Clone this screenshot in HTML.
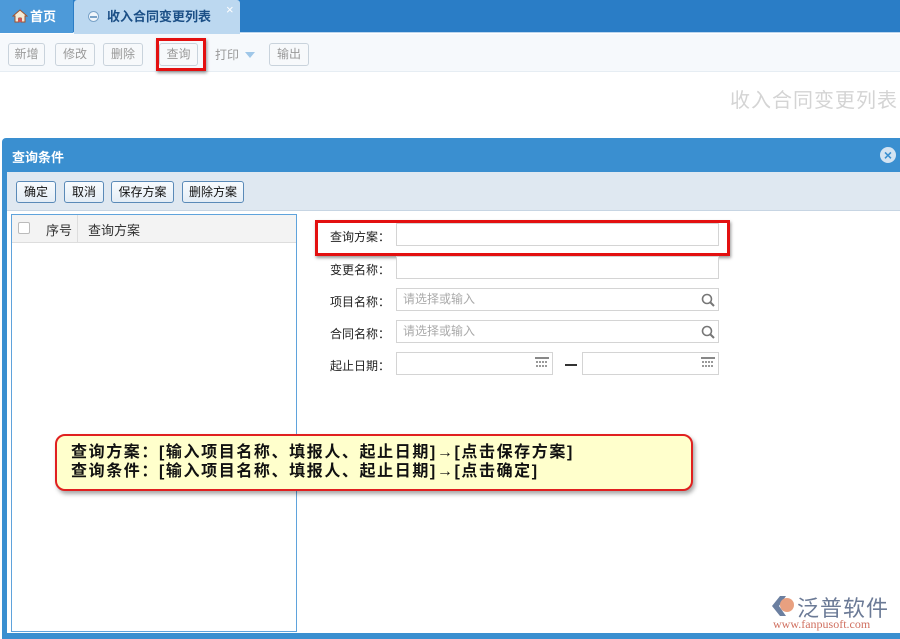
<!DOCTYPE html>
<html><head><meta charset="utf-8"><style>
*{margin:0;padding:0;box-sizing:border-box}
body{width:900px;height:639px;overflow:hidden;background:#fff;font-family:"Liberation Sans","Noto Sans CJK SC",sans-serif;font-size:12px;position:relative;color:#222}
.abs{position:absolute}
.tabbar{left:0;top:0;width:900px;height:33px;background:#2a7dc6;border-bottom:1px solid #bcd6ee}
.tab1{left:0;top:0;width:73px;height:33px;background:#4d9ad9;color:#fff;font-weight:bold;font-size:13px;line-height:33px;padding-left:30px}
.tab2{left:74px;top:0;width:166px;height:34px;background:#bcd8f0;color:#1b4f86;font-weight:bold;font-size:13px;line-height:34px;padding-left:33px;border-radius:3px 3px 0 0}
.tb{left:0;top:34px;width:900px;height:38px;background:#f6f9fc;border-bottom:1px solid #e6edf3}
.btn{position:absolute;top:43px;height:23px;border:1px solid #c9d3dc;border-radius:3px;background:#f7f9fb;color:#999;font-size:12px;line-height:21px;text-align:center}
.title{right:2px;top:84px;font-size:20px;color:#d4d4d4;letter-spacing:1px}
.dlg{left:2px;top:138px;width:898px;height:501px;background:#3a8fd0;border-radius:4px 0 0 0}
.dhead{left:12px;top:147px;color:#fff;font-weight:bold;font-size:13px}
.dtool{left:7px;top:172px;width:893px;height:39px;background:#dfe8f1;border-bottom:1px solid #c7d5e3}
.dbody{left:7px;top:211px;width:893px;height:422px;background:#fff}
.b2{position:absolute;top:181px;height:22px;border:1px solid #5a8ab8;border-radius:3px;background:linear-gradient(#f8fbfe,#e4edf6);font-size:12px;line-height:20px;text-align:center;color:#111}
.lp{left:11px;top:214px;width:286px;height:418px;border:1px solid #5fa3dc;background:#fff}
.lh{left:12px;top:215px;width:284px;height:28px;background:#f3f3f3;border-bottom:1px solid #ddd}
.lbl{position:absolute;left:330px;font-size:12px;color:#222}
.inp{position:absolute;height:23px;border:1px solid #d4d4d4;background:#fff;color:#aaa;font-size:12px;line-height:21px;padding-left:6px}
.note{left:55px;top:434px;width:638px;height:57px;background:#ffffcc;border:2px solid #e02020;border-radius:10px;box-shadow:2px 3px 4px rgba(0,0,0,.35);font-size:16px;font-weight:bold;line-height:19px;padding:7px 0 0 14px;color:#111;letter-spacing:1.6px;white-space:nowrap}
</style></head><body>
<div class="abs tabbar"></div>
<div class="abs tab1">首页</div>
<svg class="abs" style="left:12px;top:9px" width="16" height="14"><path d="M8 1L1 7h2v6h4V9h2v4h4V7h2z" fill="#f3ead6" stroke="#a0522d" stroke-width="1"/><rect x="6" y="9" width="4" height="4" fill="#c55"/></svg>
<div class="abs tab2">收入合同变更列表</div>
<div class="abs" style="left:88px;top:11px;width:11px;height:11px;border-radius:50%;background:#f0f6fb;border:1px solid #7aa3c8"></div>
<div class="abs" style="left:90px;top:16px;width:7px;height:2px;background:#7aa3c8"></div>
<div class="abs" style="left:226px;top:2px;color:#fff;font-size:13px">×</div>
<div class="abs tb"></div>
<div class="btn" style="left:8px;width:37px">新增</div>
<div class="btn" style="left:55px;width:40px">修改</div>
<div class="btn" style="left:103px;width:40px">删除</div>
<div class="btn" style="left:159px;width:39px">查询</div>
<div class="abs" style="left:156px;top:38px;width:50px;height:33px;border:3px solid #e31010;box-shadow:1px 2px 3px rgba(0,0,0,.4)"></div>
<div class="abs" style="left:215px;top:46px;color:#999">打印</div>
<div class="abs" style="left:245px;top:52px;border:5px solid transparent;border-top:6px solid #9fc7e8"></div>
<div class="btn" style="left:269px;width:40px">输出</div>
<div class="abs title">收入合同变更列表</div>
<div class="abs dlg"></div>
<div class="abs dhead">查询条件</div>
<div class="abs" style="left:880px;top:147px;width:16px;height:16px;border-radius:50%;background:#d4e4f2;color:#3a8fd0;font-weight:bold;font-size:14px;line-height:16px;text-align:center">×</div>
<div class="abs dtool"></div>
<div class="abs dbody"></div>
<div class="b2" style="left:16px;width:40px">确定</div>
<div class="b2" style="left:64px;width:40px">取消</div>
<div class="b2" style="left:111px;width:63px">保存方案</div>
<div class="b2" style="left:182px;width:62px">删除方案</div>
<div class="abs lp"></div>
<div class="abs lh"></div>
<div class="abs" style="left:18px;top:222px;width:12px;height:12px;border:1px solid #bbb;background:#fff;border-radius:2px"></div>
<div class="abs" style="left:46px;top:220px;font-size:13px;color:#333">序号</div>
<div class="abs" style="left:77px;top:215px;width:1px;height:28px;background:#ddd"></div>
<div class="abs" style="left:88px;top:220px;font-size:13px;color:#333">查询方案</div>
<div class="lbl" style="top:228px">查询方案：</div>
<div class="inp" style="left:396px;top:223px;width:323px"></div>
<div class="abs" style="left:315px;top:220px;width:415px;height:36px;border:3px solid #e31010;box-shadow:1px 2px 3px rgba(0,0,0,.4)"></div>
<div class="lbl" style="top:261px">变更名称：</div>
<div class="inp" style="left:396px;top:256px;width:323px"></div>
<div class="lbl" style="top:293px">项目名称：</div>
<div class="inp" style="left:396px;top:288px;width:323px">请选择或输入</div>
<div class="lbl" style="top:325px">合同名称：</div>
<div class="inp" style="left:396px;top:320px;width:323px">请选择或输入</div>
<svg class="abs" style="left:701px;top:293px" width="14" height="14"><circle cx="6" cy="6" r="4.5" fill="none" stroke="#777" stroke-width="1.6"/><path d="M9 9l4 4" stroke="#777" stroke-width="2"/></svg>
<svg class="abs" style="left:701px;top:325px" width="14" height="14"><circle cx="6" cy="6" r="4.5" fill="none" stroke="#777" stroke-width="1.6"/><path d="M9 9l4 4" stroke="#777" stroke-width="2"/></svg>
<div class="lbl" style="top:357px">起止日期：</div>
<div class="inp" style="left:396px;top:352px;width:157px"></div>
<div class="abs" style="left:565px;top:364px;width:12px;height:2px;background:#333"></div>
<div class="inp" style="left:582px;top:352px;width:137px"></div>
<svg class="abs" style="left:535px;top:357px" width="14" height="12"><rect width="14" height="2" fill="#888"/><g fill="#999"><rect x="1" y="4" width="2" height="2"/><rect x="4" y="4" width="2" height="2"/><rect x="7" y="4" width="2" height="2"/><rect x="10" y="4" width="2" height="2"/><rect x="1" y="8" width="2" height="2"/><rect x="4" y="8" width="2" height="2"/><rect x="7" y="8" width="2" height="2"/><rect x="10" y="8" width="2" height="2"/></g></svg>
<svg class="abs" style="left:701px;top:357px" width="14" height="12"><rect width="14" height="2" fill="#888"/><g fill="#999"><rect x="1" y="4" width="2" height="2"/><rect x="4" y="4" width="2" height="2"/><rect x="7" y="4" width="2" height="2"/><rect x="10" y="4" width="2" height="2"/><rect x="1" y="8" width="2" height="2"/><rect x="4" y="8" width="2" height="2"/><rect x="7" y="8" width="2" height="2"/><rect x="10" y="8" width="2" height="2"/></g></svg>
<div class="abs note">查询方案：[输入项目名称、填报人、起止日期]→[点击保存方案]<br>查询条件：[输入项目名称、填报人、起止日期]→[点击确定]</div>
<svg class="abs" style="left:770px;top:594px" width="26" height="24"><path d="M10 2L2 12l8 10h6L9 12l7-10z" fill="#6b7fa0"/><circle cx="17" cy="11" r="7" fill="#e8a080"/></svg>
<div class="abs" style="left:797px;top:591px;font-size:22px;color:#6b7a96;letter-spacing:1px">泛普软件</div>
<div class="abs" style="left:773px;top:617px;font-size:12px;color:#d07060;font-family:'Liberation Serif',serif">www.fanpusoft.com</div>
</body></html>
